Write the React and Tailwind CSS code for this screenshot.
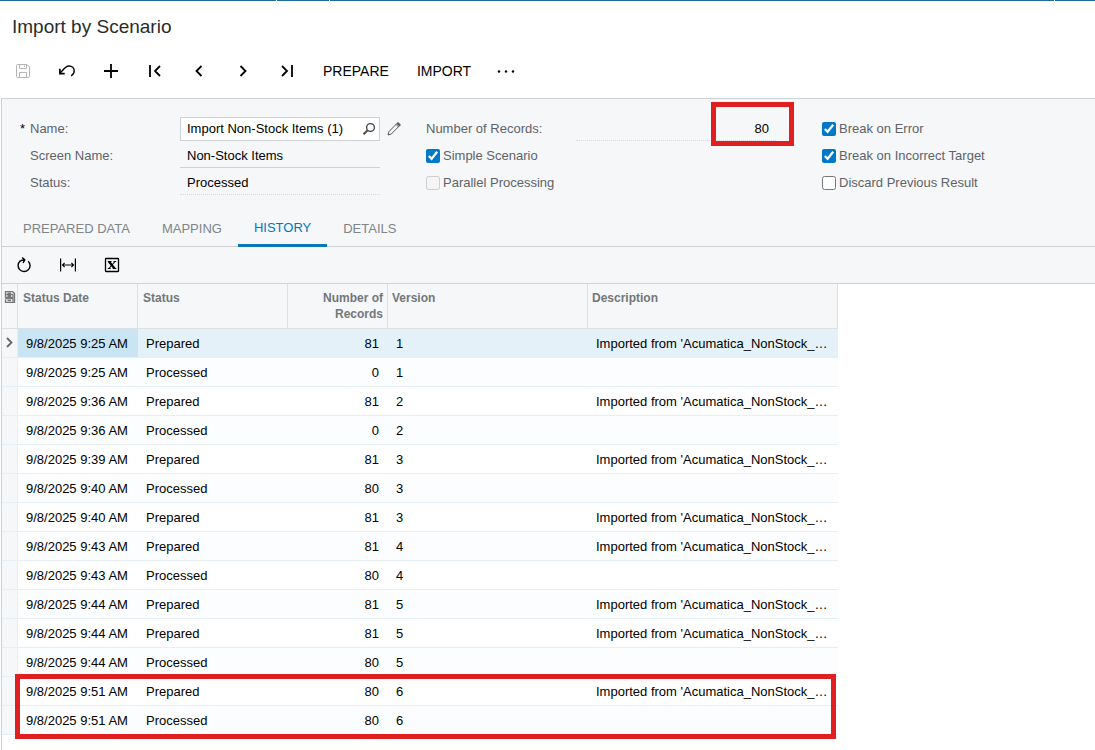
import { useState } from 'react';

const ROWS = [
  { date: '9/8/2025 9:25 AM', status: 'Prepared', records: 81, version: 1 },
  { date: '9/8/2025 9:25 AM', status: 'Processed', records: 0, version: 1 },
  { date: '9/8/2025 9:36 AM', status: 'Prepared', records: 81, version: 2 },
  { date: '9/8/2025 9:36 AM', status: 'Processed', records: 0, version: 2 },
  { date: '9/8/2025 9:39 AM', status: 'Prepared', records: 81, version: 3 },
  { date: '9/8/2025 9:40 AM', status: 'Processed', records: 80, version: 3 },
  { date: '9/8/2025 9:40 AM', status: 'Prepared', records: 81, version: 3 },
  { date: '9/8/2025 9:43 AM', status: 'Prepared', records: 81, version: 4 },
  { date: '9/8/2025 9:43 AM', status: 'Processed', records: 80, version: 4 },
  { date: '9/8/2025 9:44 AM', status: 'Prepared', records: 81, version: 5 },
  { date: '9/8/2025 9:44 AM', status: 'Prepared', records: 81, version: 5 },
  { date: '9/8/2025 9:44 AM', status: 'Processed', records: 80, version: 5 },
  { date: '9/8/2025 9:51 AM', status: 'Prepared', records: 80, version: 6 },
  { date: '9/8/2025 9:51 AM', status: 'Processed', records: 80, version: 6 },
];

const TABS = ['PREPARED DATA', 'MAPPING', 'HISTORY', 'DETAILS'];

function Icon({ children, width = 2 }) {
  return (
    <svg className="w-4 h-4" viewBox="0 0 16 16" fill="none" stroke="currentColor" strokeWidth={width} aria-hidden="true">
      {children}
    </svg>
  );
}

function ToolButton({ label, disabled, children }) {
  return (
    <button
      type="button"
      aria-label={label}
      disabled={disabled}
      className="w-11 h-8 flex items-center justify-center text-black disabled:text-[#b4b4b4]"
    >
      {children}
    </button>
  );
}

function Check({ label, defaultChecked, disabled }) {
  return (
    <label className="h-[27px] flex items-center gap-[3px] text-[#5f6368] whitespace-nowrap">
      <input
        type="checkbox"
        defaultChecked={defaultChecked}
        disabled={disabled}
        className="w-[14px] h-[14px] accent-[#0078c8]"
      />
      {label}
    </label>
  );
}

export default function App() {
  const [tab, setTab] = useState('HISTORY');
  const [selected, setSelected] = useState(0);

  return (
    <div className="min-h-screen flex flex-col bg-white text-black text-[13px] leading-4 font-['Liberation_Sans',Arial,sans-serif]">
      {/* Bottom edge of the site header */}
      <div className="h-px flex bg-white gap-px">
        <div className="w-[276px] bg-[#1b6d9c]" />
        <div className="w-[52px] bg-[#1b6d9c]" />
        <div className="flex-1 bg-[#1b6d9c]" />
        <div className="w-10 bg-[#1b6d9c]" />
      </div>

      <h1 className="px-3 pt-3 pb-[14px] text-[19px] leading-7 text-[#2b2b2b]">Import by Scenario</h1>

      {/* Main toolbar */}
      <div className="h-[43px] pl-px flex items-start">
        <div className="flex items-center">
          <ToolButton label="Save" disabled>
            <Icon width={1}>
              <path d="M2.500 1.500h9.500l2.500 2.500v9.500a1 1 0 0 1-1 1h-11a1 1 0 0 1-1-1v-11a1 1 0 0 1 1-1z" />
              <path d="M4.500 1.500v4h7v-4M9.500 2.500v1.500M4.500 14.500v-5h7v5" />
            </Icon>
          </ToolButton>
          <ToolButton label="Cancel">
            <Icon width={1.4}>
              <path d="M1.200 10C4.500 6.500 6.500 3 10 3c3 0 5.200 2 5.200 4.800 0 2.300-1.200 4-3 5" />
              <path d="M.900 5.800v4.800h4.800" strokeWidth="1.700" />
            </Icon>
          </ToolButton>
          <ToolButton label="Add">
            <Icon width={1.800}>
              <path d="M8 1v14M1 8h14" />
            </Icon>
          </ToolButton>
          <ToolButton label="First">
            <Icon width={1.800}>
              <path d="M3 2v12M13 3L8 8l5 5" />
            </Icon>
          </ToolButton>
          <ToolButton label="Previous">
            <Icon width={1.800}>
              <path d="M10.500 3l-5 5 5 5" />
            </Icon>
          </ToolButton>
          <ToolButton label="Next">
            <Icon width={1.800}>
              <path d="M5.500 3l5 5-5 5" />
            </Icon>
          </ToolButton>
          <ToolButton label="Last">
            <Icon width={1.800}>
              <path d="M3 3l5 5-5 5M13 2v12" />
            </Icon>
          </ToolButton>
          <button type="button" className="h-8 px-[14px] text-sm">PREPARE</button>
          <button type="button" className="h-8 px-[14px] text-sm">IMPORT</button>
          <button type="button" aria-label="More" className="h-8 px-[11px] flex items-center">
            <svg className="w-5 h-4" viewBox="0 0 20 16" fill="currentColor" aria-hidden="true">
              <circle cx="3" cy="8.500" r="1.200" />
              <circle cx="10" cy="8.500" r="1.200" />
              <circle cx="17" cy="8.500" r="1.200" />
            </svg>
          </button>
        </div>
      </div>

      <div className="flex-1 ml-px border-t border-l border-[#ced2d5]">
        <div className="bg-[#f5f7f9]">
          {/* Summary form */}
          <div className="pt-4 pb-[14px] pl-[18px] grid grid-cols-[406px_396px_1fr]">
            <div className="grid grid-cols-[10px_150px_200px_1fr] auto-rows-[27px] items-center text-[#5f6368]">
              <span className="text-black">*</span>
              <label htmlFor="name">Name:</label>
              <div className="h-6 flex items-center bg-white border border-[#ced2d5]">
                <input
                  id="name"
                  defaultValue="Import Non-Stock Items (1)"
                  className="min-w-0 flex-1 pl-[6px] text-black outline-none"
                />
                <button type="button" aria-label="Search" className="px-[3px]">
                  <svg className="w-[14px] h-[14px]" viewBox="0 0 14 14" fill="none" stroke="#444" strokeWidth="1.400" aria-hidden="true">
                    <circle cx="8.500" cy="5.500" r="3.900" />
                    <path d="M5.600 8.400L1.500 12.300" strokeWidth="1.900" />
                  </svg>
                </button>
              </div>
              <button type="button" aria-label="Edit" className="pl-[7px]">
                <svg className="w-[14px] h-[14px]" viewBox="0 0 14 14" fill="none" stroke="#555" strokeWidth="1" aria-hidden="true">
                  <path d="M1 13l.9-3.300L10.200 1.200c.900-.900 3.500 1.400 2.500 2.400L4.300 12z" />
                  <path d="M9 2.400l2.500 2.500" />
                  <path d="M10.500 1.200c.800-.800 3.100 1.300 2.300 2.200l-.500.500-2.300-2.300z" fill="#555" />
                </svg>
              </button>

              <label htmlFor="screen" className="col-start-2">Screen Name:</label>
              <input
                id="screen"
                readOnly
                value="Non-Stock Items"
                className="w-full h-6 px-[7px] text-black border-b border-[#ced2d5] outline-none"
              />

              <label htmlFor="status" className="col-start-2">Status:</label>
              <input
                id="status"
                readOnly
                value="Processed"
                className="w-full h-6 px-[7px] text-black border-b border-dotted border-[#d5d9dc] outline-none"
              />
            </div>

            <div>
              <div className="h-[27px] grid grid-cols-[150px_200px] items-center text-[#5f6368]">
                <label htmlFor="records">Number of Records:</label>
                <div className="relative">
                  <input
                    id="records"
                    readOnly
                    value="80"
                    className="w-full h-6 px-[7px] text-right text-black border-b border-dotted border-[#d5d9dc] outline-none"
                  />
                  <div className="absolute -top-[15px] -right-[18px] w-[83px] h-[44px] border-5 border-[#e02020] pointer-events-none" />
                </div>
              </div>
              <Check label="Simple Scenario" defaultChecked />
              <Check label="Parallel Processing" disabled />
            </div>

            <div>
              <Check label="Break on Error" defaultChecked />
              <Check label="Break on Incorrect Target" defaultChecked />
              <Check label="Discard Previous Result" />
            </div>
          </div>

          {/* Tabs */}
          <div role="tablist" className="h-[37px] pl-[5px] flex border-b border-[#ced2d5]">
            {TABS.map((name) => (
              <button
                key={name}
                type="button"
                role="tab"
                aria-selected={tab === name}
                onClick={() => setTab(name)}
                className={`h-[37px] px-4 ${
                  tab === name ? 'pt-px border-b-3 text-[#0078c0] border-[#0a78b8]' : 'text-[#808488]'
                }`}
              >
                {name}
              </button>
            ))}
          </div>

          {/* Grid toolbar */}
          <div className="h-[37px] flex items-center border-b border-[#ced2d5]">
            <ToolButton label="Refresh">
              <Icon width={1.400}>
                <path d="M4.200 4A6 6 0 1 0 12.200 4.200" />
                <path d="M4 4.200c1.200-1 2.500-1.200 4.200-1.200M6.200.600l2.600 2.400-1.800 3" />
              </Icon>
            </ToolButton>
            <ToolButton label="Fit to screen">
              <Icon width={1.200}>
                <path d="M.600 1.500v13M15.400 1.500v13M2.500 8h11M4.600 5.900L2.500 8l2.100 2.100M11.400 5.900L13.500 8l-2.100 2.100" />
              </Icon>
            </ToolButton>
            <ToolButton label="Export to Excel">
              <Icon width={1.300}>
                <rect x="1.500" y="1.500" width="13" height="13" rx="0.500" />
                <path d="M5 4.500l5.500 7" strokeWidth="2.400" />
                <path d="M11 4.500l-6 7M3.800 4.500h3.700M9.500 4.500h2.700M3.800 11.500h2.900M8.800 11.500h3.500" strokeWidth="1.100" />
              </Icon>
            </ToolButton>
          </div>
        </div>

        {/* History grid */}
        <div className="relative w-[836px]">
          <table className="w-full table-fixed border-separate border-spacing-0">
            <colgroup>
              <col className="w-4" />
              <col className="w-[120px]" />
              <col className="w-[150px]" />
              <col className="w-[100px]" />
              <col className="w-[200px]" />
              <col className="w-[250px]" />
            </colgroup>
            <thead>
              <tr className="h-[45px] bg-[#f5f7f9] text-xs leading-4 text-[#73777b] text-left align-top [&>th]:border-r [&>th]:border-b [&>th]:border-[#dce0e3] [&>th]:pt-[6px]">
                <th>
                  <svg className="w-3 h-[14px] ml-[2px]" viewBox="0 0 12 14" fill="none" stroke="#777" strokeWidth="1.300" role="img" aria-label="Notes">
                    <path d="M1.500 4.500v-2.800h7l2 1.500v9.100h-9v-3" />
                    <path d="M1.500 4.500h7.500v3h-7.500zM1.500 8.700h7.500v3.600M3.500 3.100h3.500M3.500 6h3.500M3.500 10.500h3.500" />
                  </svg>
                </th>
                <th className="px-[5px]">Status Date</th>
                <th className="px-[5px]">Status</th>
                <th className="px-1 text-right">Number of Records</th>
                <th className="px-1">Version</th>
                <th className="px-1">Description</th>
              </tr>
            </thead>
            <tbody>
              {ROWS.map((row, i) => (
                <tr
                  key={i}
                  onClick={() => setSelected(i)}
                  className={`h-[29px] [&>td]:pt-[2px] [&>td]:border-b [&>td]:border-[#e6eff5] ${
                    selected === i ? 'bg-[#e4f1f9]' : i % 2 ? 'bg-[#fbfdfe]' : 'bg-white'
                  }`}
                >
                  <td className="bg-[#f5f7f9] border-r border-r-[#dce0e3]">
                    {selected === i && (
                      <svg className="w-[14px] h-[14px]" viewBox="0 0 14 14" fill="none" stroke="#666" strokeWidth="1.800" aria-hidden="true">
                        <path d="M5 1L9.500 5.500 5 10" />
                      </svg>
                    )}
                  </td>
                  <td className={`px-2 whitespace-nowrap ${selected === i ? 'bg-[#c9e4f2]' : ''}`}>{row.date}</td>
                  <td className="px-2">{row.status}</td>
                  <td className="px-[9px] text-right">{row.records}</td>
                  <td className="px-2">{row.version}</td>
                  <td className="pl-2 whitespace-nowrap">
                    {row.status === 'Prepared' && "Imported from 'Acumatica_NonStock_…"}
                  </td>
                </tr>
              ))}
            </tbody>
          </table>
          {/* Callout round the last two rows */}
          <div className="absolute left-[13px] right-[2px] -bottom-1 h-[65px] border-5 border-[#e02020] pointer-events-none" />
        </div>
      </div>
    </div>
  );
}
